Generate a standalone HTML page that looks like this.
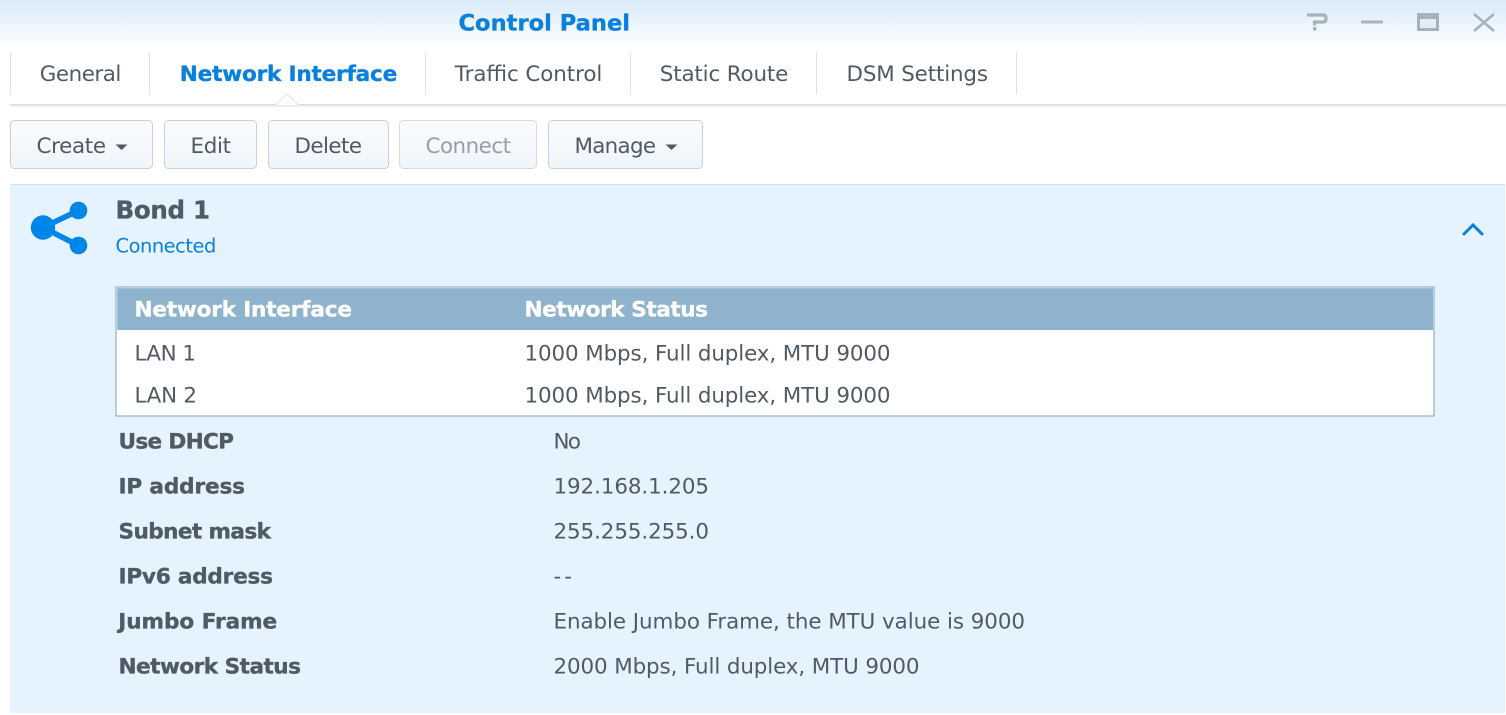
<!DOCTYPE html>
<html><head><meta charset="utf-8"><title>Control Panel</title>
<style>
html,body{margin:0;padding:0;background:#fff;width:1506px;height:715px;overflow:hidden}
svg{display:block}
text{font-family:"DejaVu Sans","Liberation Sans",sans-serif;font-size:21.4px;fill:#505a64}
.b{font-weight:bold;font-size:21.6px;stroke:#505a64;stroke-width:.35px}
.blue{fill:#0a80dc}
.b.blue{stroke:#0a80dc}
</style></head><body>
<svg width="1506" height="715" viewBox="0 0 1506 715" xmlns="http://www.w3.org/2000/svg">
<defs>
<linearGradient id="top" x1="0" y1="0" x2="0" y2="1"><stop offset="0" stop-color="#d9eafa"/><stop offset="1" stop-color="#ffffff"/></linearGradient>
<linearGradient id="btn" x1="0" y1="0" x2="0" y2="1"><stop offset="0" stop-color="#f9fbfe"/><stop offset="1" stop-color="#f0f5fa"/></linearGradient>
<linearGradient id="sh" x1="0" y1="0" x2="0" y2="1"><stop offset="0" stop-color="#d6d8da"/><stop offset="1" stop-color="#f6f7f7"/></linearGradient>
</defs>
<rect width="1506" height="48" fill="url(#top)"/>
<text class="b blue" x="458.500" y="30.500" textLength="171.500" style="font-size:22.500px">Control Panel</text>

<g fill="#dfe2e5">
<rect x="10" y="52" width="1" height="42"/><rect x="149" y="52" width="1" height="42"/><rect x="425" y="52" width="1" height="42"/><rect x="630" y="52" width="1" height="42"/><rect x="816" y="52" width="1" height="42"/><rect x="1016" y="52" width="1" height="42"/>
</g>
<text x="39.800" y="81" textLength="81.500">General</text>
<text class="b blue" x="179.800" y="81" textLength="217.500">Network Interface</text>
<text x="454.800" y="81" textLength="147.500">Traffic Control</text>
<text x="659.800" y="81" textLength="128.500">Static Route</text>
<text x="846.500" y="81" textLength="141.500">DSM Settings</text>

<rect x="10" y="104" width="1496" height="3" fill="url(#sh)"/>
<path d="M276 105 L287 94 L298 105 Z" fill="#fff"/>
<path d="M276 104.500 L287 94 L298 104.500" fill="none" stroke="#e3e5e7" stroke-width="1"/>

<g fill="url(#btn)" stroke="#c9d1d8">
<rect x="10.500" y="120.500" width="142" height="48" rx="4"/>
<rect x="164.500" y="120.500" width="92" height="48" rx="4"/>
<rect x="268.500" y="120.500" width="120" height="48" rx="4"/>
<rect x="399.500" y="120.500" width="137" height="48" rx="4" stroke="#d5dbe0"/>
<rect x="548.500" y="120.500" width="154" height="48" rx="4"/>
</g>
<text x="36.500" y="153" textLength="69.500">Create</text>
<path d="M115.500 144.500 H127.500 L121.500 150 Z" fill="#505a64"/>
<text x="190.500" y="153" textLength="40.500">Edit</text>
<text x="294.500" y="153" textLength="67.500">Delete</text>
<text x="425.500" y="153" textLength="85.500" style="fill:#969ea6">Connect</text>
<text x="574.500" y="153" textLength="81.500">Manage</text>
<path d="M665.500 144.500 H677.500 L671.500 150 Z" fill="#505a64"/>

<!-- window buttons -->
<g fill="none" stroke="#a6b3bb" stroke-width="3">
<path d="M1307 15 H1323 Q1326 15 1326 18 V19.500 Q1326 22 1323 22 H1314.500 V25.500" stroke-width="3.200"/>
<path d="M1361 22 H1383"/>
<path d="M1474 14 L1494 31 M1494 14 L1474 31" stroke-width="2.600"/>
</g>
<rect x="1313" y="27" width="3.500" height="3.500" fill="#a6b3bb"/>
<rect x="1417" y="13" width="22" height="18" fill="#a6b3bb"/>
<rect x="1420" y="19" width="16" height="9" fill="#e0eefa"/>

<!-- panel -->
<rect x="10" y="184" width="1495" height="529" fill="#e4f3fe"/>
<rect x="10" y="184" width="1495" height="1" fill="#d5e1ea"/>

<g fill="#0086e8">
<circle cx="43" cy="227.500" r="12.200"/>
<circle cx="78.500" cy="210.500" r="8.800"/>
<circle cx="78.500" cy="245.500" r="8.800"/>
<path d="M43 227.500 L78.500 210.500 M43 227.500 L78.500 245.500" stroke="#0086e8" stroke-width="5.500"/>
</g>
<text class="b" x="115.500" y="218.500" textLength="94.500" style="font-size:24.500px">Bond 1</text>
<text class="blue" x="115.500" y="252.500" textLength="100.800" style="font-size:19.400px">Connected</text>
<path d="M1464 234 L1473 225 L1482 234" fill="none" stroke="#0a80dc" stroke-width="3" stroke-linecap="round"/>

<!-- table -->
<rect x="116" y="287" width="1318" height="129" fill="#fff" stroke="#8fb0c8" stroke-width="1.200"/>
<rect x="117.200" y="288.200" width="1315.800" height="41.800" fill="#8fb2cd"/>
<text class="b" x="134.500" y="316.500" textLength="217.500" style="fill:#fff;stroke:#fff">Network Interface</text>
<text class="b" x="524.500" y="316.500" textLength="183.500" style="fill:#fff;stroke:#fff">Network Status</text>
<text x="134.500" y="360.500" textLength="61.500">LAN 1</text>
<text x="524.500" y="360.500" textLength="366">1000 Mbps, Full duplex, MTU 9000</text>
<text x="134.500" y="402.500" textLength="62.500">LAN 2</text>
<text x="524.500" y="402.500" textLength="366">1000 Mbps, Full duplex, MTU 9000</text>

<!-- details -->
<text class="b" x="118.500" y="448.500" textLength="115.500">Use DHCP</text>
<text x="553.500" y="448.500" textLength="27.500">No</text>
<text class="b" x="118.500" y="493.500" textLength="126.500">IP address</text>
<text x="553.500" y="493.500" textLength="155.500">192.168.1.205</text>
<text class="b" x="118.500" y="538.500" textLength="152.500">Subnet mask</text>
<text x="553.500" y="538.500" textLength="155.500">255.255.255.0</text>
<text class="b" x="118.500" y="583.500" textLength="154.500">IPv6 address</text>
<text x="553.500" y="583.500" textLength="18.500">--</text>
<text class="b" x="118.200" y="628.500" textLength="159">Jumbo Frame</text>
<text x="553.500" y="628.500" textLength="471.500">Enable Jumbo Frame, the MTU value is 9000</text>
<text class="b" x="118.500" y="673.500" textLength="182.500">Network Status</text>
<text x="553.500" y="673.500" textLength="366">2000 Mbps, Full duplex, MTU 9000</text>
</svg>
</body></html>
